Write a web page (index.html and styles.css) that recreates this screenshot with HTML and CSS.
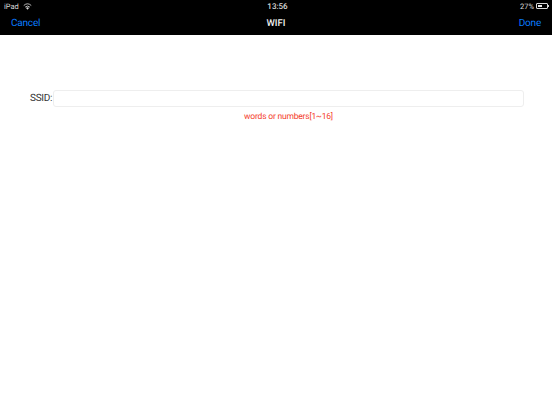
FILE: index.html
```html
<!DOCTYPE html>
<html lang="en">
<head>
    <meta charset="UTF-8">
    <title>WIFI</title>
    <link rel="stylesheet" href="styles.css">
</head>
<body>
<div class="status-bar">
    <div class="status-left">
        <span>iPad</span>
        <svg class="wifi-icon" width="9" height="7" viewBox="0 0 18 14">
            <path d="M9 13.5 L12 10 A4.6 4.6 0 0 0 6 10 Z" fill="#d8d8d8"/>
            <path d="M4.3 8.2 A7.2 7.2 0 0 1 13.7 8.2" fill="none" stroke="#d8d8d8" stroke-width="1.7"/>
            <path d="M1.5 5 A11.2 11.2 0 0 1 16.5 5" fill="none" stroke="#d8d8d8" stroke-width="1.7"/>
        </svg>
    </div>
    <div class="status-time">13:56</div>
    <div class="status-right">
        <span>27%</span>
        <div class="battery"><div class="battery-level"></div></div>
        <div class="battery-tip"></div>
    </div>
</div>
<div class="nav-bar">
    <a class="nav-btn">Cancel</a>
    <div class="nav-title">WIFI</div>
    <a class="nav-btn nav-btn-right">Done</a>
</div>
<div class="content">
    <div class="ssid-row">
        <label class="ssid-label">SSID:</label>
        <div class="ssid-input"></div>
    </div>
    <div class="hint">words or numbers[1~16]</div>
</div>
</body>
</html>
```

FILE: styles.css
```css
* {
    box-sizing: border-box;
}

body {
    margin: 0;
    width: 552px;
    height: 414px;
    overflow: hidden;
    background-color: #fff;
    font-family: Roboto, 'Liberation Sans', sans-serif;
    text-rendering: geometricPrecision;
}

.status-bar {
    display: grid;
    grid-template-columns: 1fr auto 1fr;
    align-items: center;
    height: 12px;
    padding: 0 3px 0 4px;
    background-color: #000;
    color: #d8d8d8;
    font-size: 7.5px;
}

.status-left {
    display: flex;
    align-items: center;
    gap: 4px;
}

.status-time {
    font-size: 8px;
    font-weight: 500;
    padding-left: 2px;
}

.status-right {
    display: flex;
    align-items: center;
    justify-content: flex-end;
}

.battery {
    width: 12px;
    height: 6px;
    margin-left: 2px;
    padding: 1px;
    border: 0.5px solid #d8d8d8;
    border-radius: 1px;
}

.battery-level {
    width: 4px;
    height: 100%;
    background-color: #f0f0f0;
}

.battery-tip {
    width: 1px;
    height: 2px;
    background-color: #d8d8d8;
}

.nav-bar {
    display: grid;
    grid-template-columns: 1fr auto 1fr;
    align-items: center;
    height: 23px;
    padding: 0 11px 1px 11px;
    background-color: #000;
}

.nav-btn {
    color: #0a7cff;
    font-size: 10px;
    letter-spacing: -0.2px;
}

.nav-btn-right {
    text-align: right;
}

.nav-title {
    color: #f0f0f0;
    font-size: 9.5px;
    font-weight: 500;
}

.content {
    padding-top: 55px;
}

.ssid-row {
    display: flex;
    align-items: center;
    padding: 0 28px 0 30px;
}

.ssid-label {
    font-size: 10px;
    letter-spacing: -0.3px;
    color: #333;
}

.ssid-input {
    flex: 1;
    height: 17px;
    margin-left: 1px;
    background-color: #fff;
    border: 1px solid #eee;
    border-radius: 3px;
}

.hint {
    margin-top: 5px;
    padding-left: 25px;
    text-align: center;
    color: #f4402c;
    font-size: 8.5px;
    letter-spacing: -0.2px;
    line-height: 11px;
}
```
